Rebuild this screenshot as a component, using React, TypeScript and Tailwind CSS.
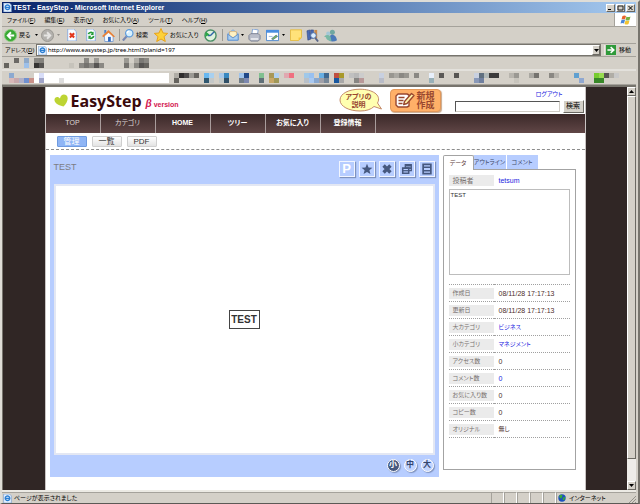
import type { ReactNode } from 'react'

type Cell = [col: number, row: number, fill: string]

const MENU = [
  ['ファイル', 'F'],
  ['編集', 'E'],
  ['表示', 'V'],
  ['お気に入り', 'A'],
  ['ツール', 'T'],
  ['ヘルプ', 'H'],
]

const NAV = [
  { label: 'TOP', bold: false },
  { label: 'カテゴリ', bold: false },
  { label: 'HOME', bold: true },
  { label: 'ツリー', bold: true },
  { label: 'お気に入り', bold: true },
  { label: '登録情報', bold: true },
]

const DETAILS = [
  { label: '作成日', value: '08/11/28 17:17:13', link: false },
  { label: '更新日', value: '08/11/28 17:17:13', link: false },
  { label: '大カテゴリ', value: 'ビジネス', link: true },
  { label: '小カテゴリ', value: 'マネジメント', link: true },
  { label: 'アクセス数', value: '0', link: false },
  { label: 'コメント数', value: '0', link: true },
  { label: 'お気に入り数', value: '0', link: false },
  { label: 'コピー数', value: '0', link: false },
  { label: 'オリジナル', value: '無し', link: false },
]

const LINK_CELLS: Cell[] = [
  [2, 0, '#6b6966'], [4, 0, '#8fa9c8'], [6, 0, '#8a8883'], [7, 0, '#85837e'],
  [16, 0, '#8a8883'], [18, 0, '#9b9993'], [24, 0, '#9b9993'], [26, 0, '#b0ada6'],
  [27, 0, '#7b7975'], [28, 0, '#8a8883'],
  [0, 1, '#66645f'], [4, 1, '#9dc0ea'], [6, 1, '#363433'], [7, 1, '#575553'],
  [13, 1, '#c6c3bb'], [15, 1, '#8a8883'], [16, 1, '#75736f'], [17, 1, '#8a8883'],
  [18, 1, '#575553'], [19, 1, '#8a8883'], [24, 1, '#75736f'], [25, 1, '#c6c3bb'],
  [26, 1, '#8a8883'], [27, 1, '#575553'], [28, 1, '#66645f'],
]

const TOOLBAR_CELLS: Cell[] = [
  [1, 0, '#8ca9d0'], [7, 0, '#d8ddf8'], [34, 0, '#b0ada6'], [35, 0, '#2f2d2d'],
  [36, 0, '#4b4949'], [37, 0, '#9b9993'], [38, 0, '#66645f'], [40, 0, '#68b8f0'],
  [41, 0, '#a8d0f0'], [43, 0, '#a8c8e8'], [44, 0, '#3888c0'], [47, 0, '#a0c4ec'],
  [48, 0, '#204888'], [51, 0, '#80c090'], [53, 0, '#a89858'], [54, 0, '#b0d0f0'],
  [56, 0, '#e0a8b0'], [57, 0, '#f07080'], [60, 0, '#a0c8e8'], [61, 0, '#98c0f0'],
  [63, 0, '#68aee2'], [64, 0, '#406890'], [66, 0, '#c05040'], [67, 0, '#a89828'],
  [69, 0, '#c0c0c0'], [70, 0, '#b8b8b8'], [71, 0, '#cccccc'], [75, 0, '#c8d0e0'],
  [77, 0, '#989690'], [78, 0, '#aaa8a2'], [79, 0, '#8a8883'], [80, 0, '#989690'],
  [82, 0, '#8a8883'], [85, 0, '#e8f0fc'], [87, 0, '#5b5957'], [90, 0, '#575553'],
  [94, 0, '#c8d0e0'], [95, 0, '#607080'], [96, 0, '#b0b8b8'], [97, 0, '#3c3b3b'],
  [98, 0, '#3c3b3b'], [101, 0, '#b8b5ae'], [102, 0, '#9b9993'], [105, 0, '#aaa8a2'],
  [106, 0, '#75736f'], [109, 0, '#8a8883'], [110, 0, '#b8b5ae'], [114, 0, '#60a0d0'],
  [118, 0, '#78cc30'], [119, 0, '#98dc50'], [120, 0, '#575553'], [121, 0, '#b0ada6'],
  [122, 0, '#c8c8c8'],
  [1, 1, '#d8b8b8'], [2, 1, '#c8a8ac'], [3, 1, '#b0b0c8'], [4, 1, '#7090d0'],
  [5, 1, '#c89088'], [7, 1, '#a0a4c8'], [11, 1, '#dddddd'], [34, 1, '#66645f'],
  [40, 1, '#305870'], [41, 1, '#c4c8c8'], [43, 1, '#c0c8c8'], [44, 1, '#305068'],
  [47, 1, '#707c88'], [48, 1, '#7c88b0'], [51, 1, '#607078'], [53, 1, '#c8a868'],
  [54, 1, '#a09858'], [60, 1, '#b8c0c8'], [61, 1, '#a8c8f0'], [62, 1, '#88a8d0'],
  [63, 1, '#a0a0a8'], [64, 1, '#788898'], [66, 1, '#1858a0'], [67, 1, '#a8a8a8'],
  [70, 1, '#888683'], [71, 1, '#b89898'], [75, 1, '#b8bcc8'], [85, 1, '#98b0b8'],
  [94, 1, '#8898b8'], [95, 1, '#7080a0'], [102, 1, '#c8c5bd'], [115, 1, '#90a8d0'],
  [118, 1, '#388828'], [119, 1, '#388828'],
]

const raised = 'border border-t-white border-l-white border-r-[#6b6963] border-b-[#6b6963] bg-[#d4d0c8]'

function Mosaic({ cells, field }: { cells: Cell[]; field?: boolean }) {
  return (
    <svg width="620" height="10" className="shrink-0" shapeRendering="crispEdges" aria-hidden="true">
      {field && <rect x="30" y="0" width="135" height="10" fill="#fff" />}
      {cells.map(([col, row, fill]) => (
        <rect key={`${col}-${row}`} x={col * 5} y={row * 5} width="5" height="5" fill={fill} />
      ))}
    </svg>
  )
}

function Svg({ size = 14, children }: { size?: number; children: ReactNode }) {
  return (
    <svg width={size} height={size} viewBox="0 0 14 14" className="shrink-0" aria-hidden="true">
      {children}
    </svg>
  )
}

function IePage({ size = 9 }: { size?: number }) {
  return (
    <Svg size={size}>
      <path d="M1 0h9l3 3v11H1z" fill="#e8f2ff" stroke="#6f9bd0" />
      <path d="M10.3 8.2A3.6 3.6 0 1 1 10.6 7H4" fill="none" stroke="#2a7ed2" strokeWidth="2" />
    </Svg>
  )
}

function ToolButton({ label, className, children }: { label: string; className: string; children: ReactNode }) {
  return (
    <button type="button" aria-label={label} className={`flex shrink-0 items-center ${className}`}>
      {children}
    </button>
  )
}

function Caret({ className, dim }: { className: string; dim?: boolean }) {
  return (
    <span className={`flex shrink-0 justify-center ${className}`}>
      <svg width="3" height="2" viewBox="0 0 3 2" aria-hidden="true">
        <path d="M0 0h3L1.5 2z" fill={dim ? '#8d8a84' : '#000'} />
      </svg>
    </span>
  )
}

function Separator() {
  return <span className="mx-[2px] h-3 w-px shrink-0 bg-[#9c9992]" />
}

function TitleBar() {
  return (
    <div className="flex h-[11px] shrink-0 items-center gap-px bg-linear-to-r from-[#0a246a] to-[#a6caf0] px-px">
      <IePage size={9} />
      <h1 className="flex-1 truncate text-[7px] leading-[10px] font-bold text-white">
        TEST - EasyStep - Microsoft Internet Explorer
      </h1>
      <button type="button" aria-label="最小化" className={`h-[8px] w-[9px] ${raised}`}>
        <svg width="7" height="6" className="block"><path d="M1 4.5h3" stroke="#000" /></svg>
      </button>
      <button type="button" aria-label="最大化" className={`h-[8px] w-[9px] ${raised}`}>
        <svg width="7" height="6" className="block"><path d="M1 1h5v4H1z" fill="none" stroke="#222" /></svg>
      </button>
      <button type="button" aria-label="閉じる" className={`h-[8px] w-[9px] ${raised}`}>
        <svg width="7" height="6" className="block"><path d="M1.5 1l4 4m0-4l-4 4" stroke="#000" /></svg>
      </button>
    </div>
  )
}

function MenuBar() {
  return (
    <div className="flex h-[14px] shrink-0 border-b border-[#a5a29b]">
      <nav className="flex flex-1 items-center gap-[9px] border-r border-[#a5a29b] pl-[5px]">
        {MENU.map(([name, key]) => (
          <button key={key} type="button" className="text-[6px] leading-[10px] whitespace-nowrap">
            {name}(<u>{key}</u>)
          </button>
        ))}
      </nav>
      <div className="flex w-[21px] items-center justify-center bg-white">
        <svg width="11" height="10" viewBox="0 0 22 20" aria-hidden="true">
          <path d="M5 2q4-2 7 0l-2 7q-3-2-7 0z" fill="#e8642c" />
          <path d="M13 3q3 2 8 0l-2 7q-4 2-8 0z" fill="#76b043" />
          <path d="M3 10q4-2 7 0l-2 7q-3-2-7 0z" fill="#4a86d8" />
          <path d="M11 11q3 2 8 0l-2 7q-4 2-8 0z" fill="#f4c430" />
        </svg>
      </div>
    </div>
  )
}

function Toolbar() {
  return (
    <div className="flex h-[17px] shrink-0 items-center border-b border-[#a5a29b] pl-[2px] text-[6px] leading-[10px] whitespace-nowrap">
      <ToolButton label="戻る" className="w-[28px] gap-[2px]">
        <Svg size={13}>
          <circle cx="7" cy="7" r="6.5" fill="#3aa935" stroke="#8acb7c" />
          <path d="M11 7H4m3.5-3.5L4 7l3.5 3.5" fill="none" stroke="#fff" strokeWidth="2" />
        </Svg>
        戻る
      </ToolButton>
      <Caret className="w-[8px]" />
      <ToolButton label="進む" className="w-[15px] justify-center">
        <Svg size={13}>
          <circle cx="7" cy="7" r="6.5" fill="#b3b1ad" stroke="#979590" />
          <path d="M3 7h7M6.5 3.5L10 7l-3.5 3.5" fill="none" stroke="#e6e5e3" strokeWidth="2" />
        </Svg>
      </ToolButton>
      <Caret className="w-[7px]" dim />
      <ToolButton label="中止" className="w-[20px] justify-center">
        <Svg size={12}>
          <path d="M2 0h7l3 3v11H2z" fill="#fbfdff" stroke="#83a6dd" />
          <path d="M4.5 5l5 5m0-5l-5 5" stroke="#e2361d" strokeWidth="2.5" />
        </Svg>
      </ToolButton>
      <ToolButton label="更新" className="w-[17px] justify-center">
        <Svg size={12}>
          <path d="M2 0h7l3 3v11H2z" fill="#fbfdff" stroke="#83a6dd" />
          <path d="M4 6a3 3 0 0 1 5-1m1 3a3 3 0 0 1-5 2" fill="none" stroke="#219a35" strokeWidth="2" />
          <path d="M10 3v4H6.5zM4 12V8h3.5z" fill="#219a35" />
        </Svg>
      </ToolButton>
      <ToolButton label="ホーム" className="w-[18px] justify-center">
        <Svg size={13}>
          <path d="M2.5 7L7 3l5 4v6.5H3z" fill="#f5f9ff" stroke="#7c9fd0" />
          <path d="M0 7.5L7 1l7 7-1.5 1L7 4 1.5 9z" fill="#e8833a" />
          <path d="M6.5 8.5h3v5h-3z" fill="#2f69c0" />
          <path d="M2.5 1h2v2.5l-2 1.5z" fill="#4b80cb" />
        </Svg>
      </ToolButton>
      <Separator />
      <ToolButton label="検索" className="w-[28px] gap-[2px]">
        <Svg size={12}>
          <path d="M5.5 8.5L1 13.5" stroke="#7887b0" strokeWidth="2.5" />
          <circle cx="8.5" cy="5" r="4.3" fill="#d6f0ff" stroke="#5a9adb" strokeWidth="1.4" />
          <path d="M6 5q0-2.5 2.5-2.5" fill="none" stroke="#fff" strokeWidth="1.5" />
        </Svg>
        検索
      </ToolButton>
      <ToolButton label="お気に入り" className="ml-1 w-[47px] gap-[2px]">
        <Svg size={14}>
          <path d="M7 .5l2 4.5 4.7.4L10 8.6l1.3 4.9L7 11l-4.3 2.5L4 8.6.3 5.4 5 5z" fill="#fdd13a" stroke="#e8a21a" />
        </Svg>
        お気に入り
      </ToolButton>
      <ToolButton label="履歴" className="w-[19px] justify-center">
        <Svg size={13}>
          <circle cx="7" cy="7" r="6" fill="#dff1dc" stroke="#4a8f66" strokeWidth="1.5" />
          <path d="M7 7l4-4M7 7H4" stroke="#2f64a8" strokeWidth="1.5" />
          <path d="M1 9l1-6 4 3z" fill="#2aa745" />
        </Svg>
      </ToolButton>
      <Separator />
      <ToolButton label="メール" className="w-[15px] justify-center">
        <Svg size={12}>
          <path d="M1 5.5L7 1l6 4.5V13H1z" fill="#cfe6fb" stroke="#6b9bd2" />
          <path d="M3 3h8v5L7 10 3 8z" fill="#fff2c4" stroke="#d8a45a" strokeWidth=".7" />
          <path d="M1 6l6 4.5L13 6v7H1z" fill="#a9cff2" stroke="#5a8ccc" />
        </Svg>
      </ToolButton>
      <Caret className="w-[5px]" />
      <ToolButton label="印刷" className="w-[19px] justify-center">
        <Svg size={13}>
          <path d="M4 6l1-6 6 1-1 6z" fill="#fff" stroke="#82a3d4" />
          <path d="M1 7l2-2h8l2 2v4l-2 2H3l-2-2z" fill="#b9bdc9" stroke="#787e91" />
          <path d="M3 10h8v1.5H3z" fill="#f6f6f8" />
        </Svg>
      </ToolButton>
      <ToolButton label="編集" className="w-[16px] justify-center">
        <Svg size={13}>
          <path d="M.5 1.5h13v11H.5z" fill="#fff" stroke="#4d86cb" />
          <path d="M0 1h14v3H0z" fill="#4a8ee0" />
          <path d="M3 8h4" stroke="#9bb8dd" />
          <path d="M6 10.5l5-4 1.5 1.5-5 3.5z" fill="#7cb955" stroke="#41668a" strokeWidth=".7" />
        </Svg>
      </ToolButton>
      <Caret className="w-[7px]" />
      <ToolButton label="メモ" className="w-[17px] justify-center">
        <Svg size={12}>
          <path d="M.5 1h13v9L10 13.5H.5z" fill="#ffe27a" stroke="#e3b738" />
          <path d="M10 13.5V10h3.5z" fill="#f8c63c" />
        </Svg>
      </ToolButton>
      <ToolButton label="リサーチ" className="w-[17px] justify-center">
        <Svg size={13}>
          <path d="M1 2l3-1 1 10-3 1zM5 1h3v9H5z" fill="#4a6bb5" stroke="#30457c" strokeWidth=".6" />
          <path d="M9 1h3v9H9z" fill="#c98a4a" />
          <circle cx="8" cy="7" r="3" fill="#d8ecff" stroke="#4e6fa8" />
          <path d="M10 9.5l3 4" stroke="#5a6688" strokeWidth="2" />
        </Svg>
      </ToolButton>
      <ToolButton label="メッセンジャー" className="w-[18px] justify-center">
        <Svg size={13}>
          <circle cx="9" cy="3.5" r="2.7" fill="#6fa7a0" />
          <path d="M6 13q-1-7 3-7 4 1 5 6-3 2-8 1z" fill="#4b79b8" />
          <circle cx="4.5" cy="5" r="2.2" fill="#a3c7d6" />
          <path d="M0 8q4-3 7 0l1 5q-5 0-6-4z" fill="#79b8a6" />
        </Svg>
      </ToolButton>
    </div>
  )
}

function AddressBar() {
  return (
    <form className="flex h-[13px] shrink-0 items-center border-b border-[#a5a29b] pl-[3px] text-[6px] leading-[10px]" onSubmit={e => e.preventDefault()}>
      <label htmlFor="address" className="w-[31px] shrink-0 whitespace-nowrap">
        アドレス(<u>D</u>)
      </label>
      <div className="flex h-[12px] min-w-0 flex-1 items-center gap-px border border-[#77746d] bg-white pl-px">
        <IePage size={9} />
        <input
          id="address"
          type="text"
          defaultValue="http://www.easystep.jp/tree.html?planid=197"
          className="h-[10px] min-w-0 flex-1 font-['Noto_Sans',sans-serif] text-[6px] leading-[10px] outline-none"
        />
        <button type="button" aria-label="履歴を表示" className={`flex h-[10px] w-[8px] items-center justify-center ${raised}`}>
          <svg width="5" height="3" aria-hidden="true"><path d="M0 0h5L2.5 3z" /></svg>
        </button>
      </div>
      <button type="submit" className="ml-[3px] flex w-[32px] shrink-0 items-center gap-[3px] border-l border-[#eceae4] pl-px whitespace-nowrap">
        <Svg size={10}>
          <path d="M0 0h14v14H0z" fill="#2f9a3a" />
          <path d="M2 7h8M6.5 3L11 7l-4.5 4" fill="none" stroke="#fff" strokeWidth="2" />
        </Svg>
        移動
      </button>
    </form>
  )
}

function SiteHeader() {
  return (
    <header className="flex h-[27px] shrink-0 items-center bg-white pl-2">
      <svg width="14" height="13" viewBox="0 0 14 13" className="shrink-0" aria-hidden="true">
        <path d="M9.5 12.5C5 11.5 1 9.5.5 6.500 0 3 4 1.500 6 4.500 6.500 1 9.500-.5 12 1c3.500 2.500 1 8-2.500 11.500z" fill="#bdd433" />
      </svg>
      <a href="#top" className="ml-[3px] flex items-baseline gap-1 whitespace-nowrap">
        <span className="font-['Open_Sans','Noto_Sans',sans-serif] text-[16px] leading-[24px] font-bold text-[#3a0a0c]">EasyStep</span>
        <span className="text-[7px] font-bold text-[#d3164f]">
          <i className="text-[10px]">β</i> version
        </span>
      </a>
      <a href="#about" className="relative ml-auto flex h-[25px] w-[44px] shrink-0 items-center justify-center">
        <svg width="44" height="25" viewBox="0 0 44 25" className="absolute inset-0" aria-hidden="true">
          <path d="M35 18.5l7.5 2.5-4-6C43 7 33 1.200 21 1.200 10 1.200 1 5.500 1 12s9 11 20 11c6 0 11-1.500 14-4.500z" fill="#ffffb0" stroke="#c48a68" />
        </svg>
        <span className="relative pr-1 text-center text-[7px] leading-[8px] font-bold text-[#99472f]">
          アプリの<br />説明
        </span>
      </a>
      <a href="#new" className="ml-[7px] flex h-[23px] w-[51px] shrink-0 items-center justify-center gap-px rounded-[4px] border border-[#e2985a] bg-[#ffb068] text-[9px] leading-[9px] font-bold text-[#99472f] shadow-[1px_1px_1px_#c9a98c]">
        <svg width="20" height="17" viewBox="0 0 20 17" fill="none" stroke="#99472f" strokeWidth="1.4" strokeLinejoin="round" aria-hidden="true">
          <path d="M3 2h9l2 1v11l-2 1H3l-2-2V4z" fill="#fff" />
          <path d="M3.500 5.500h6m-6 3h5m-5 3h4" />
          <path d="M9.500 9.500l7-8 2.500 2-7 8-3.300 1z" fill="#fff2a8" />
        </svg>
        <span>新規<br />作成</span>
      </a>
      <div className="ml-[14px] flex shrink-0 flex-col pr-px">
        <a href="#logout" className="mr-[21px] self-end text-[6px] leading-[11px] text-[#1a1ae0]">ログアウト</a>
        <form className="flex items-center gap-[3px]" onSubmit={e => e.preventDefault()}>
          <input type="text" aria-label="検索" className="h-[11px] w-[105px] border border-t-[#555] border-l-[#555] border-r-[#cfccc5] border-b-[#cfccc5] px-[2px] text-[7px]" />
          <button type="submit" className={`h-[13px] w-[21px] text-center text-[7px] leading-[10px] ${raised}`}>検索</button>
        </form>
      </div>
    </header>
  )
}

function IconButton({ label, children }: { label: string; children: ReactNode }) {
  return (
    <button type="button" aria-label={label} className="flex size-4 items-center justify-center border border-[#f1f5ff] bg-[#b7cdff] text-[#46587f] shadow-[1px_1px_1px_#7f92bd]">
      <Svg size={12}>{children}</Svg>
    </button>
  )
}

function TreePanel() {
  return (
    <section className="flex min-w-0 flex-1 flex-col bg-[#b7cdff] px-[4px] pt-[6px]">
      <div className="flex h-[23px] shrink-0 items-start justify-between">
        <h2 className="text-[9px] leading-[12px] text-[#7c7c84]">TEST</h2>
        <div className="flex gap-1">
          <button type="button" className="size-4 border border-[#f1f5ff] text-[13px] leading-[14px] font-bold text-white shadow-[1px_1px_1px_#7f92bd]">P</button>
          <IconButton label="お気に入りに追加">
            <path d="M7 1l1.8 4.2 4.5.3-3.5 2.9 1.2 4.4L7 10.4l-4 2.4 1.2-4.4L.7 5.5l4.5-.3z" fill="currentColor" />
          </IconButton>
          <IconButton label="削除">
            <path d="M3 3l8 8m0-8l-8 8" stroke="currentColor" strokeWidth="4" />
          </IconButton>
          <IconButton label="コピー">
            <path d="M5 2h7v7H5z" fill="#b7cdff" stroke="currentColor" strokeWidth="1.5" />
            <path d="M5 3h7M5 6h7" stroke="currentColor" strokeWidth="2" />
            <path d="M2 6h7v6H2z" fill="#b7cdff" stroke="currentColor" strokeWidth="1.8" />
            <path d="M2 9h7" stroke="currentColor" strokeWidth="1.5" />
          </IconButton>
          <IconButton label="一覧">
            <path d="M2.5 1.5h9v11h-9z" fill="none" stroke="currentColor" strokeWidth="2" />
            <path d="M3 5h8M3 9h8" stroke="currentColor" strokeWidth="1.8" />
          </IconButton>
        </div>
      </div>
      <div className="flex min-h-[60px] flex-1 items-center justify-center border-2 border-[#e3e7f3] bg-white">
        <button type="button" className="h-[19px] w-[31px] border border-[#444] text-[10px] leading-[17px] font-bold text-[#333]">
          TEST
        </button>
      </div>
      <div className="flex h-[22px] shrink-0 items-center justify-end gap-1 pr-px pb-[2px] text-[8px] leading-[10px] font-bold">
        <button type="button" className="size-[13px] rounded-full border border-white bg-[#46587f] text-white shadow-[1px_1px_1px_#7f92bd]">小</button>
        <button type="button" className="size-[13px] rounded-full border border-white bg-[#c3d5ff] text-[#34466e] shadow-[1px_1px_1px_#7f92bd]">中</button>
        <button type="button" className="size-[13px] rounded-full border border-white bg-[#c3d5ff] text-[#34466e] shadow-[1px_1px_1px_#7f92bd]">大</button>
      </div>
    </section>
  )
}

function Sidebar() {
  return (
    <aside className="flex w-[133px] shrink-0 flex-col pb-[7px] text-[6px] leading-[11px]">
      <div role="tablist" className="flex h-[14px] shrink-0 whitespace-nowrap">
        <button type="button" role="tab" aria-selected="true" className="z-10 -mb-px w-[31px] rounded-t-[2px] border border-b-0 border-[#a3a3a3] bg-white text-[#5b3a38]">データ</button>
        <button type="button" role="tab" aria-selected="false" className="mr-px w-[32px] bg-[#b7cdff] text-[#3e4a68]">アウトライン</button>
        <button type="button" role="tab" aria-selected="false" className="w-[31px] bg-[#b7cdff] text-[#3e4a68]">コメント</button>
      </div>
      <div role="tabpanel" className="flex-1 border border-[#a3a3a3] px-[5px] pt-[5px]">
        <div className="flex h-[11px] items-center">
          <span className="h-[11px] w-[45px] bg-[#ebebeb] pl-[4px] text-[7px] text-[#77706e]">投稿者</span>
          <a href="#user" className="pl-[5px] text-[7px] text-[#2222e0]">tetsum</a>
        </div>
        <textarea aria-label="説明" defaultValue="TEST" className="mt-[3px] block h-[86px] w-full resize-none border border-[#bdbdbd] p-px text-[6px] leading-[8px] text-[#333]" />
        <table className="mt-[9px] w-full border-collapse border-t border-dotted border-[#a0a0a0]">
          <tbody>
            {DETAILS.map(({ label, value, link }) => (
              <tr key={label} className="h-[17px] border-b border-dotted border-[#a0a0a0]">
                <th scope="row" className="w-[45px] p-0 text-left font-normal text-[#77706e]">
                  <span className="block h-[11px] bg-[#ebebeb] pl-[4px] whitespace-nowrap">{label}</span>
                </th>
                <td className={`p-0 pl-[5px] text-[#4d2c2a] ${/\d/.test(value) ? 'text-[7px]' : ''}`}>
                  {link ? <a href="#detail" className="text-[#2222e0]">{value}</a> : value}
                </td>
              </tr>
            ))}
          </tbody>
        </table>
      </div>
    </aside>
  )
}

function StatusBar() {
  return (
    <footer className="flex h-[13px] shrink-0 items-center border-t-2 border-[#eceae4] text-[6px] leading-[10px]">
      <div className="flex h-[11px] flex-1 items-center gap-[2px] border-t border-[#a5a29b] pl-px">
        <IePage size={9} />
        ページが表示されました
      </div>
      {[0, 1, 2, 3, 4].map(i => (
        <span key={i} className="h-[11px] w-[13px] border-t border-r border-l border-[#a5a29b] border-r-white" />
      ))}
      <div className="flex h-[11px] w-[80px] items-center gap-[3px] border-t border-l border-[#a5a29b] pl-px">
        <Svg size={8}>
          <circle cx="7" cy="7" r="6.5" fill="#1d4fc0" />
          <path d="M2 3q4-3 6 0L6 8 3 7zM9 6l4-1-2 6-3-1z" fill="#35a83c" />
        </Svg>
        <span className="flex-1">インターネット</span>
        <svg width="7" height="7" className="self-end" aria-hidden="true">
          <path d="M0 7l7-7M3 7l4-4M6 7l1-1" stroke="#95928b" />
        </svg>
      </div>
    </footer>
  )
}

export default function App() {
  return (
    <div className="flex h-screen min-h-[440px] w-full flex-col border-t-2 border-r-2 border-b border-l-2 border-t-[#dfddd7] border-r-[#77746d] border-b-[#5b5955] border-l-[#dfddd7] bg-[#d4d0c8] pr-[2px] font-['Liberation_Sans','Noto_Sans_CJK_JP',sans-serif] text-black [font-feature-settings:'palt']">
      <TitleBar />
      <MenuBar />
      <Toolbar />
      <AddressBar />
      <div className="flex h-[12px] shrink-0 items-center overflow-hidden pl-[2px]">
        <Mosaic cells={LINK_CELLS} />
      </div>
      <div className="flex h-[16px] shrink-0 items-center overflow-hidden border-t-2 border-b border-t-[#e3e1dc] border-b-[#a5a29b] pl-[2px]">
        <Mosaic cells={TOOLBAR_CELLS} field />
      </div>
      <div className="flex min-h-0 flex-1 border-t-2 border-l border-[#77746d]">
        <main className="flex min-w-0 flex-1 justify-center bg-[#302625]">
          <div className="flex w-full max-w-[541px] flex-col border-x border-[#c9c4c3] bg-white">
            <SiteHeader />
            <nav className="flex h-[19px] shrink-0 bg-linear-to-b from-[#3b2929] to-[#604646] text-[7px] leading-[17px] text-white">
              {NAV.map(({ label, bold }) => (
                <a key={label} href="#nav" className={`w-[55px] border-r border-[#a99d9c] text-center whitespace-nowrap ${bold ? 'font-bold' : 'text-[#ddd5d5]'}`}>
                  {label}
                </a>
              ))}
            </nav>
            <div className="flex h-[17px] shrink-0 items-center gap-[5px] border-b border-dashed border-[#8c8c8c] pl-[11px] text-center text-[8px] leading-[10px]">
              <button type="button" className="h-[11px] w-[30px] rounded-[1px] border border-[#6f9be0] bg-[#8fb5f5] leading-[9px] text-white">管理</button>
              <button type="button" className="h-[11px] w-[30px] rounded-[1px] border border-[#cfcfcf] bg-linear-to-b from-white to-[#e3e3e3] leading-[9px] text-[#333]">一覧</button>
              <button type="button" className="h-[11px] w-[30px] rounded-[1px] border border-[#cfcfcf] bg-linear-to-b from-white to-[#e3e3e3] leading-[9px] text-[#333]">PDF</button>
            </div>
            <div className="flex min-h-0 flex-1 gap-[4px] pt-[5px] pr-[9px] pb-[13px] pl-[4px]">
              <TreePanel />
              <Sidebar />
            </div>
          </div>
        </main>
        <div className="flex w-[9px] shrink-0 flex-col bg-[#eeece8]">
          <button type="button" aria-label="上へ" className={`flex h-[9px] items-center justify-center ${raised}`}>
            <svg width="5" height="3" aria-hidden="true"><path d="M0 3h5L2.5 0z" /></svg>
          </button>
          <div className={`mb-[22px] flex-1 ${raised}`} />
          <button type="button" aria-label="下へ" className={`flex h-[9px] items-center justify-center ${raised}`}>
            <svg width="5" height="3" aria-hidden="true"><path d="M0 0h5L2.5 3z" /></svg>
          </button>
        </div>
      </div>
      <StatusBar />
    </div>
  )
}
